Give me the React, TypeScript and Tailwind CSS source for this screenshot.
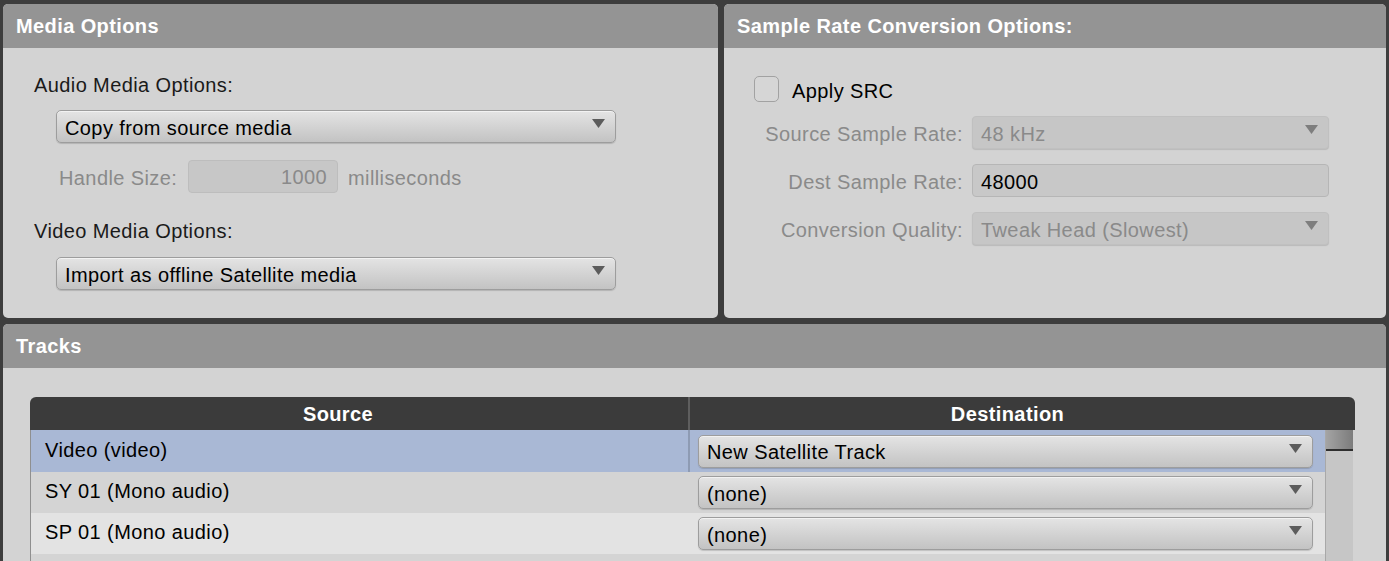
import React from 'react';

const font = { fontFamily: '"Liberation Sans", Arial, sans-serif' };

function Arrow({ muted }: { muted?: boolean }) {
  return (
    <svg width="13" height="9" viewBox="0 0 13 9" className="absolute right-[10px] top-[8px]">
      <path d="M0 0 H13 L6.5 9 Z" fill={muted ? '#7e7e7e' : '#5c5c5c'} />
    </svg>
  );
}

function Dropdown({ value, className = '' }: { value: string; className?: string }) {
  return (
    <div
      className={`relative h-[33px] rounded-[5px] border border-[#9d9d9d] bg-gradient-to-b from-[#e4e4e4] to-[#c3c3c3] shadow-[inset_0_1px_0_#f2f2f2,0_1px_1px_rgba(0,0,0,0.15)] flex items-center pl-[8px] text-black ${className}`}
    >
      <span className="leading-none mt-[2px]">{value}</span>
      <Arrow />
    </div>
  );
}

function DisabledDropdown({ value }: { value: string }) {
  return (
    <div className="relative h-[33px] rounded-[4px] bg-[#c6c6c6] border border-[#c0c0c0] shadow-[0_1px_1px_rgba(0,0,0,0.12)] flex items-center pl-[8px] text-[#8a8a8a]">
      <span className="leading-none mt-[2px]">{value}</span>
      <Arrow muted />
    </div>
  );
}

function Panel({ title, children, className = '' }: { title: string; children: React.ReactNode; className?: string }) {
  return (
    <div className={`rounded-[5px] bg-[#d3d3d3] overflow-hidden flex flex-col ${className}`}>
      <div className="h-[44px] shrink-0 bg-[#949494] flex items-center px-[13px] text-white font-bold tracking-[0.4px]">
        {title}
      </div>
      {children}
    </div>
  );
}

const rows = [
  { source: 'Video (video)', dest: 'New Satellite Track', bg: 'bg-[#a9b8d5]', h: 'h-[42px]', selected: true },
  { source: 'SY 01 (Mono audio)', dest: '(none)', bg: 'bg-[#d4d4d4]', h: 'h-[41px]', selected: false },
  { source: 'SP 01 (Mono audio)', dest: '(none)', bg: 'bg-[#e3e3e3]', h: 'h-[41px]', selected: false },
  { source: '', dest: '', bg: 'bg-[#d4d4d4]', h: 'h-[41px]', selected: false },
];

export default function App() {
  return (
    <div
      className="w-[1389px] h-[561px] overflow-hidden bg-[#3d3d3d] pl-[3px] pr-[3px] pt-[4px] text-[20px] tracking-[0.4px]"
      style={font}
    >
      <div className="grid grid-cols-[715px_662px] gap-[6px] h-[314px]">
        <Panel title="Media Options">
          <div className="flex flex-col pl-[31px] text-[#1a1a1a]">
            <div className="mt-[25px] h-[24px] leading-[24px]">Audio Media Options:</div>
            <Dropdown value="Copy from source media" className="mt-[13px] ml-[22px] w-[560px]" />
            <div className="mt-[17px] ml-[25px] flex items-center h-[33px] text-[#8a8a8a]">
              <span className="w-[129px] mt-[2px]">Handle Size:</span>
              <div className="w-[150px] h-[33px] rounded-[4px] bg-[#c7c7c7] border border-[#bdbdbd] flex items-center justify-end pr-[10px]">
                1000
              </div>
              <span className="ml-[10px] mt-[2px]">milliseconds</span>
            </div>
            <div className="mt-[26px] h-[24px] leading-[24px]">Video Media Options:</div>
            <Dropdown value="Import as offline Satellite media" className="mt-[14px] ml-[22px] w-[560px]" />
          </div>
        </Panel>

        <Panel title="Sample Rate Conversion Options:">
          <div className="flex flex-col pl-[30px]">
            <div className="mt-[28px] flex items-center h-[26px]">
              <div className="w-[25px] h-[26px] rounded-[5px] border-[1.5px] border-[#a2a2a2] bg-[#d6d6d6]" />
              <span className="ml-[13px] mt-[3px] text-black">Apply SRC</span>
            </div>
            <div className="mt-[14px] grid grid-cols-[209px_357px] gap-x-[9px] gap-y-[15px] items-center">
              <span className="text-right text-[#8a8a8a] mt-[2px]">Source Sample Rate:</span>
              <DisabledDropdown value="48 kHz" />
              <span className="text-right text-[#8a8a8a] mt-[2px]">Dest Sample Rate:</span>
              <div className="h-[33px] rounded-[4px] bg-[#c8c8c8] border border-[#b6b6b6] flex items-center pl-[8px] pt-[2px] text-black">
                48000
              </div>
              <span className="text-right text-[#8a8a8a] mt-[2px]">Conversion Quality:</span>
              <DisabledDropdown value="Tweak Head (Slowest)" />
            </div>
          </div>
        </Panel>
      </div>

      <Panel title="Tracks" className="mt-[6px] h-[300px] rounded-b-none">
        <div className="mt-[29px] ml-[27px] w-[1325px]">
          <div className="h-[33px] rounded-t-[6px] bg-[#3b3b3b] flex text-white font-bold">
            <div className="w-[658px] flex items-center justify-center pr-[42px]">Source</div>
            <div className="w-[2px] bg-[#5e5e5e]" />
            <div className="flex-1 flex items-center justify-center pr-[30px]">Destination</div>
          </div>
          <div className="flex">
            <div className="flex-1 border-l border-[#8f8f8f]">
              {rows.map((r, i) => (
                <div key={i} className={`flex ${r.h} ${r.bg}`}>
                  <div className="w-[657px] flex items-center pl-[14px] pb-[3px] text-black">
                    {r.source}
                  </div>
                  <div className={`w-[2px] ${r.selected ? 'bg-[#8e9bb3]' : ''}`} />
                  <div className="flex-1 pl-[8px] pr-[12px] flex items-center">
                    {r.dest && <Dropdown value={r.dest} className="w-full" />}
                  </div>
                </div>
              ))}
            </div>
            <div className="w-[28px] mr-[2px] bg-[#c6c6c6] border-l border-[#a8a8a8]">
              <div className="h-[21px] bg-gradient-to-r from-[#a4a4a4] to-[#7c7c7c] border-b-2 border-[#2e2e2e]" />
            </div>
          </div>
        </div>
      </Panel>
    </div>
  );
}
